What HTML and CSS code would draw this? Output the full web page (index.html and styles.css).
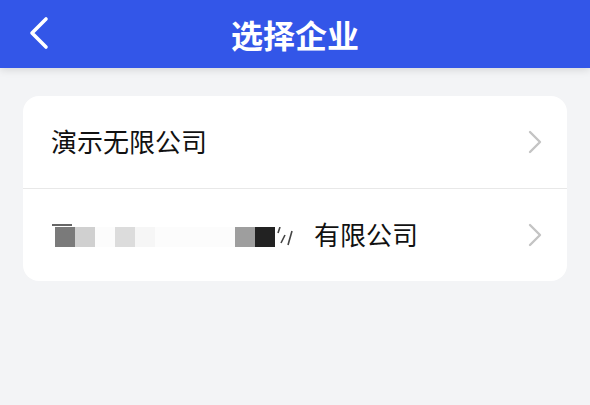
FILE: index.html
```html
<!DOCTYPE html>
<html lang="zh-CN">
<head>
    <meta charset="UTF-8">
    <meta name="viewport" content="width=device-width, initial-scale=1.0">
    <title>选择企业</title>
    <link rel="stylesheet" href="styles.css">
</head>
<body>
    <header class="topbar">
        <span class="back">
            <svg width="22" height="34" viewBox="0 0 22 34"><path d="M18 3 L4 17 L18 31" fill="none" stroke="#fff" stroke-width="3.6" stroke-linecap="round" stroke-linejoin="round"/></svg>
        </span>
        <h1>选择企业</h1>
    </header>
    <div class="list">
        <div class="item">
            <span class="name">演示无限公司</span>
            <svg class="arrow" width="14" height="24" viewBox="0 0 14 24"><path d="M2 2 L12 12 L2 22" fill="none" stroke="#c4c4c4" stroke-width="2.4" stroke-linecap="round" stroke-linejoin="round"/></svg>
        </div>
        <div class="item">
            <span class="name">
                <span class="mosaic">
                    <i class="m1"></i><i class="m2"></i><i class="m3"></i><i class="m4"></i><i class="m5"></i><i class="m3"></i><i class="m3"></i><i class="m3"></i><i class="m3"></i><i class="m7"></i><i class="m8"></i>
                    <svg class="frag" width="20" height="20" viewBox="0 0 20 20"><path d="M5 0 L3 6 M10 8 L6 16 M17 4 L13 18" fill="none" stroke="#444" stroke-width="1.6"/></svg>
                </span>有限公司
            </span>
            <svg class="arrow" width="14" height="24" viewBox="0 0 14 24"><path d="M2 2 L12 12 L2 22" fill="none" stroke="#c4c4c4" stroke-width="2.4" stroke-linecap="round" stroke-linejoin="round"/></svg>
        </div>
    </div>
</body>
</html>
```

FILE: styles.css
```css
body {
    margin: 0;
    background-color: #f3f4f6;
    font-family: "Noto Sans CJK SC", "Noto Sans", sans-serif;
    color: #111;
}
.topbar {
    height: 68px;
    background-color: #3356e8;
    display: flex;
    align-items: center;
    justify-content: center;
    position: relative;
    box-shadow: 0 2px 8px rgba(0, 0, 0, 0.12);
}
.topbar h1 {
    margin: 0;
    color: #fff;
    font-size: 32px;
    font-weight: bold;
}
.back {
    position: absolute;
    left: 28px;
    top: 16px;
    display: flex;
}
.list {
    margin: 28px 23px 0;
    background-color: #fff;
    border-radius: 16px;
}
.item {
    height: 92px;
    display: flex;
    align-items: center;
    justify-content: space-between;
    padding: 0 25px 0 28px;
}
.item + .item {
    border-top: 1px solid #e8e8e8;
}
.name {
    font-size: 26px;
    display: flex;
    align-items: center;
    margin-bottom: 4px;
}
.mosaic {
    display: flex;
    margin-left: 4px;
    margin-right: 19px;
    padding-top: 8px;
    position: relative;
}
.mosaic::before {
    content: "";
    position: absolute;
    left: -3px;
    top: 5px;
    width: 20px;
    height: 2px;
    background-color: #666;
}
.mosaic i {
    width: 20px;
    height: 20px;
}
.m1 { background-color: #7a7a7a; }
.m2 { background-color: #d0d0d0; }
.m3 { background-color: #fcfcfc; }
.m4 { background-color: #dcdcdc; }
.m5 { background-color: #f6f6f6; }
.m7 { background-color: #9e9e9e; }
.m8 { background-color: #222; }
```
